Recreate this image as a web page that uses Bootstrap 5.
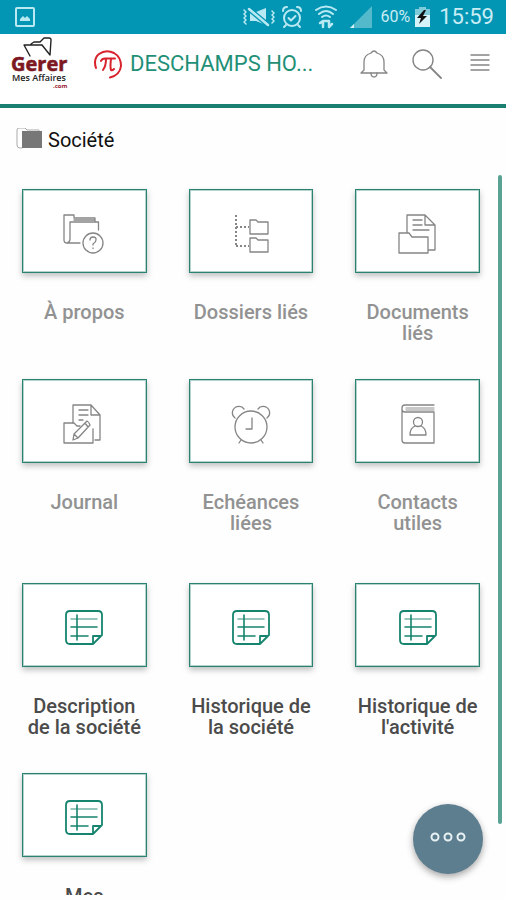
<!DOCTYPE html>
<html lang="fr">
<head>
<meta charset="utf-8">
<meta name="viewport" content="width=device-width, initial-scale=1">
<title>Gérer mes affaires</title>
<link rel="stylesheet" href="https://cdn.jsdelivr.net/npm/bootstrap@5.3.0/dist/css/bootstrap.min.css">
<style>
body { font-family: Roboto, "Liberation Sans", sans-serif; background: #fefefe; }
svg { fill: none; stroke-linecap: round; stroke-linejoin: round; flex: none; display: block; }
.status-bar { background: #0396b4; color: #c9edf4; height: 34px; padding: 0 12px 0 14px; }
.status-bar .level { font-size: 16px; }
.status-bar .clock { font-size: 22px; line-height: 34px; }
.app-bar { border-bottom: 4px solid #1a7f70; padding: 0 16px 10px 10px; height: 74px; background: #fff; }
.app-bar h1 { font-size: 22px; line-height: 28px; color: #1f9077; }
.icon-btn { background: none; border: 0; padding: 0; color: #858585; }
.section-title { font-size: 20px; line-height: 24px; color: #111; padding: 20px 16px 0; }
.tiles { padding: 37px 5px 0 1px; }
.tile { padding: 0 21px; margin-bottom: 34px; color: #929292; text-decoration: none; font-size: 20px; line-height: 21px; font-weight: 500; text-align: center; }
.tile-box { height: 84px; border: 1px solid #2a8270; background: #fff; color: #858585; box-shadow: inset 0 0 0 1px rgba(42,130,112,.35), 0 3px 6px rgba(0,0,0,.25); margin-bottom: 29px; }
.tile-label { min-height: 43px; }
.tile.note { color: #4b4b4b; }
.tile.note .tile-box { color: #16846e; }
.tiles + .tiles { padding-top: 14px; }
.scroll-thumb { top: 67px; right: 4px; width: 4px; bottom: 71px; background: #5aa394; border-radius: 2px; }
.fab { right: 23px; bottom: 26px; width: 70px; height: 70px; border: 0; background: #5d7e8f; box-shadow: 0 3px 7px rgba(0,0,0,.35); }
.bottom-edge { height: 5px; }
</style>
<script src="https://cdn.jsdelivr.net/npm/bootstrap@5.3.0/dist/js/bootstrap.bundle.min.js"></script>
</head>
<body class="vh-100 d-flex flex-column overflow-hidden position-relative">
<svg width="0" height="0" class="position-absolute" aria-hidden="true">
  <symbol id="note" viewBox="0 0 48 48">
    <path d="M33 43H10Q6 43 6 39V14Q6 10 10 10H38Q42 10 42 14V34L33 43V35H41" stroke-width="1.8"/>
    <path d="M11 18H37" stroke-width="1.5" opacity=".6"/><path d="M11 26H37M11 35H28M17 14V39" stroke-width="1.6"/>
  </symbol>
</svg>

<div class="status-bar d-flex align-items-center flex-shrink-0">
  <svg class="me-auto" width="22" height="22" viewBox="0 0 22 22" stroke="#b9e9f2" stroke-width="2" aria-hidden="true"><rect x="2" y="2" width="18" height="18" rx="1"/><path d="M6 15V13L9 10L11 12L13 10L16 13V15Z" fill="#b9e9f2" stroke="none"/></svg>
  <svg class="me-1" width="36" height="24" viewBox="0 0 36 24" stroke="#b9e9f2" stroke-width="2" aria-hidden="true"><path d="M3 5L5 7L3 9L5 11L3 13L5 15L3 17L5 19M31 6L33 8L31 10L33 12L31 14L33 16L31 18" stroke-width="1.5"/><path d="M9 7H15L25 3V20L15 16H9Z" fill="#b9e9f2" stroke="none"/><path d="M8 4L27 20" stroke="#0396b4" stroke-width="5"/><path d="M8 4L27 20" stroke-width="2.500"/></svg>
  <svg width="22" height="24" viewBox="0 0 22 24" stroke="#b9e9f2" stroke-width="2" aria-hidden="true"><circle cx="11" cy="13" r="8"/><path d="M7.500 13L10 15.500L14.500 11M2 6Q2 2 6 2M20 6Q20 2 16 2M5 20L3 22M17 20L19 22"/></svg>
  <svg class="mx-2" width="30" height="26" viewBox="0 0 30 26" stroke="#b9e9f2" stroke-width="2" aria-hidden="true"><path d="M5 6Q15 -1 25 6M8 10Q15 4 22 10M11 13Q15 10 19 13"/><path d="M12 23V17M9 19L12 17M18 17V23L21 20M12 17H18" stroke-width="2.500"/></svg>
  <svg class="me-2" width="24" height="24" viewBox="0 0 24 24" aria-hidden="true"><path d="M1 23L23 1V23Z" fill="#55b9cc"/><path d="M1 23L5 19V23Z" fill="#d5f3f8"/></svg>
  <span class="level">60%</span>
  <svg class="ms-1 me-2" width="17" height="22" viewBox="0 0 17 22" aria-hidden="true"><path d="M5 1H12V3H16V9H1V3H5Z" fill="#7fcbd9"/><path d="M1 9H16V21H1Z" fill="#d5f3f8"/><path d="M10 4L3 12H7L5 18L13 10H9L12 4Z" fill="#111"/></svg>
  <span class="clock">15:59</span>
</div>

<header class="app-bar d-flex align-items-center flex-shrink-0">
  <a href="#" class="me-4" aria-label="Gerer Mes Affaires">
    <svg width="60" height="58" viewBox="0 0 60 58">
      <path d="M20 21L14 10H32L40 20L41 5Q41 3 39 3H34L30 7H24L21 9M32 10L40 20" stroke="#222" stroke-width="1.400"/>
      <text x="1" y="36" font-family="Open Sans, sans-serif" font-weight="700" font-size="20" fill="#7d1822" stroke="#7d1822" stroke-width=".6">Gerer</text>
      <text x="2" y="46" font-family="Open Sans, sans-serif" font-weight="600" font-size="9" fill="#222">Mes Affaires</text>
      <text x="43" y="53" font-family="Open Sans, sans-serif" font-weight="700" font-size="6" fill="#9b2030">.com</text>
    </svg>
  </a>
  <svg class="me-2" width="28" height="30" viewBox="0 0 28 30" stroke="#d8232c" stroke-width="2" aria-hidden="true"><path d="M2 19Q-1 10 5 5Q12 0 20 4Q27 8 27 17Q26 26 16 28.500"/><path d="M7 12Q8 9.500 11 9.500H21M12 10Q12 17 9 21M17 10Q16 18 17 21Q18 22 20 20"/></svg>
  <h1 class="mb-0 me-auto fw-normal text-truncate">DESCHAMPS HO...</h1>
  <button class="icon-btn me-4" type="button" aria-label="Notifications"><svg width="28" height="30" viewBox="0 0 28 30" stroke="currentColor" stroke-width="1.300"><path d="M1 24L4 21V13Q4 6 11 4Q14 0 17 4Q24 6 24 13V21L27 24Z"/><path d="M11 24Q11 28 14 28Q17 28 17 24"/></svg></button>
  <button class="icon-btn me-4" type="button" aria-label="Rechercher"><svg width="30" height="30" viewBox="0 0 30 30" stroke="currentColor" stroke-width="1.400"><circle cx="11" cy="11" r="10"/><path d="M18 18L29 29" stroke-width="1.800"/></svg></button>
  <button class="icon-btn ms-1" type="button" aria-label="Menu"><svg width="20" height="22" viewBox="0 0 20 22" stroke="currentColor" stroke-width="1.400"><path d="M1 2H19M1 7H19M1 12H19M1 17H19"/></svg></button>
</header>

<main class="flex-grow-1 overflow-hidden position-relative">
  <h2 class="section-title d-flex align-items-center mb-0 fw-normal">
    <svg class="me-1" width="28" height="24" viewBox="0 0 28 24" aria-hidden="true"><path d="M6 20H4Q1 20 1 17V2Q1 0 3 0H9L11 2H23V4" stroke="#aaa"/><path d="M6 3H26V20H6Z" fill="#777"/></svg>Société
  </h2>
  <div class="tiles row g-0">
    <a href="#" class="tile col-4">
      <div class="tile-box d-flex align-items-center justify-content-center"><svg width="48" height="48" viewBox="0 0 48 48" stroke="currentColor" stroke-width="1.300"><path d="M20 36H7Q4 36 4 33V8H14V11H35V15M10 32V15H38.500V23M10 32Q10 35 7 36M14 13H35"/><circle cx="33" cy="36" r="10"/><path d="M30 33Q30 30 33 30Q36.500 30 36 33Q36 35 33 37V38M33 41V41.500"/></svg></div>
      <div class="tile-label">À propos</div>
    </a>
    <a href="#" class="tile col-4">
      <div class="tile-box d-flex align-items-center justify-content-center"><svg width="48" height="48" viewBox="0 0 48 48" stroke="currentColor" stroke-width="1.300"><path d="M9 8V40" stroke-width="2" stroke-dasharray="2 2" stroke-linecap="butt"/><path d="M9 20H22M9 39H22" stroke-width="2" stroke-dasharray="2 2" stroke-linecap="butt"/><path d="M23 13H29L31 15H41V27H23ZM23 31H29L31 33H41V45H23Z"/></svg></div>
      <div class="tile-label">Dossiers liés</div>
    </a>
    <a href="#" class="tile col-4">
      <div class="tile-box d-flex align-items-center justify-content-center"><svg width="48" height="48" viewBox="0 0 48 48" stroke="currentColor" stroke-width="1.300"><path d="M13 26V8H31L41 18V43H35M31 8V18H41M19 13H28M19 18H28M19 23H35M5 26H15L18 30H34V46H5Z"/></svg></div>
      <div class="tile-label">Documents liés</div>
    </a>
    <a href="#" class="tile col-4">
      <div class="tile-box d-flex align-items-center justify-content-center"><svg width="48" height="48" viewBox="0 0 48 48" stroke="currentColor" stroke-width="1.300"><path d="M13 26V8H31L40 18V43H35M31 8V18H40M19 13H28M19 18H28M19 23H23"/><path d="M4 26H14L17 29H20M33 32V46H4V26"/><path d="M13 43L14 37L27 24Q29 25 30 28L18 41ZM14 37L18 41M25 26L28 30"/></svg></div>
      <div class="tile-label">Journal</div>
    </a>
    <a href="#" class="tile col-4">
      <div class="tile-box d-flex align-items-center justify-content-center"><svg width="48" height="48" viewBox="0 0 48 48" stroke="currentColor" stroke-width="1.300"><circle cx="24" cy="30" r="16"/><path d="M8 21Q4 18 6 13Q9 8 15 10L17 12M40 21Q44 18 42 13Q39 8 33 10L31 12M25 21V32H19M14 43L12 46M34 43L36 46"/></svg></div>
      <div class="tile-label">Echéances liées</div>
    </a>
    <a href="#" class="tile col-4">
      <div class="tile-box d-flex align-items-center justify-content-center"><svg width="48" height="48" viewBox="0 0 48 48" stroke="currentColor" stroke-width="1.300"><path d="M40 8H11Q8 8 8 11V43Q8 46 11 46H40V15H11Q8 15 8 12"/><path d="M12 11H40M12 13H40" opacity=".6"/><circle cx="24" cy="25" r="4.500"/><path d="M21 29Q16 31 16 38H32Q32 31 27 29"/></svg></div>
      <div class="tile-label">Contacts utiles</div>
    </a>
  </div>
  <div class="tiles row g-0">
    <a href="#" class="tile note col-4">
      <div class="tile-box d-flex align-items-center justify-content-center"><svg width="48" height="48" stroke="currentColor"><use href="#note"/></svg></div>
      <div class="tile-label">Description de la société</div>
    </a>
    <a href="#" class="tile note col-4">
      <div class="tile-box d-flex align-items-center justify-content-center"><svg width="48" height="48" stroke="currentColor"><use href="#note"/></svg></div>
      <div class="tile-label">Historique de la société</div>
    </a>
    <a href="#" class="tile note col-4">
      <div class="tile-box d-flex align-items-center justify-content-center"><svg width="48" height="48" stroke="currentColor"><use href="#note"/></svg></div>
      <div class="tile-label">Historique de l'activité</div>
    </a>
    <a href="#" class="tile note col-4">
      <div class="tile-box d-flex align-items-center justify-content-center"><svg width="48" height="48" stroke="currentColor"><use href="#note"/></svg></div>
      <div class="tile-label">Mes</div>
    </a>
  </div>
  <div class="scroll-thumb position-absolute"></div>
</main>
<div class="bottom-edge flex-shrink-0"></div>
<button class="fab position-absolute rounded-circle d-flex align-items-center justify-content-center" type="button" aria-label="Plus d'actions"><svg width="40" height="14" viewBox="0 0 40 14" stroke="#e8f1f4" stroke-width="2"><circle cx="7" cy="5" r="3.500"/><circle cx="20" cy="5" r="3.500"/><circle cx="33" cy="5" r="3.500"/></svg></button>
</body>
</html>
